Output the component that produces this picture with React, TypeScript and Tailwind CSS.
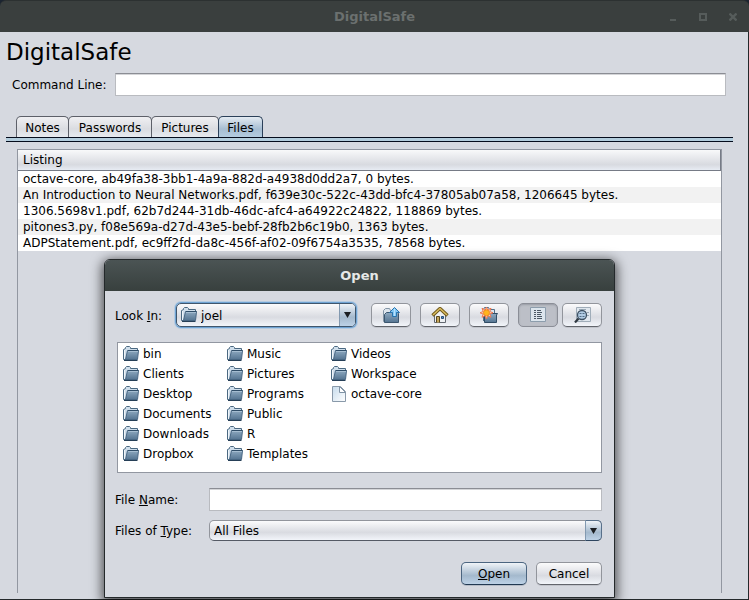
import type { ReactNode } from 'react';

const TABS = [
  { name: 'Notes', width: 'w-[53px]' },
  { name: 'Passwords', width: 'w-[84px]' },
  { name: 'Pictures', width: 'w-[68px]' },
  { name: 'Files', width: 'w-[45px]' },
];

const LISTING = [
  'octave-core, ab49fa38-3bb1-4a9a-882d-a4938d0dd2a7, 0 bytes.',
  'An Introduction to Neural Networks.pdf, f639e30c-522c-43dd-bfc4-37805ab07a58, 1206645 bytes.',
  '1306.5698v1.pdf, 62b7d244-31db-46dc-afc4-a64922c24822, 118869 bytes.',
  'pitones3.py, f08e569a-d27d-43e5-bebf-28fb2b6c19b0, 1363 bytes.',
  'ADPStatement.pdf, ec9ff2fd-da8c-456f-af02-09f6754a3535, 78568 bytes.',
];

const ENTRIES = [
  'bin', 'Clients', 'Desktop', 'Documents', 'Downloads', 'Dropbox',
  'Music', 'Pictures', 'Programs', 'Public', 'R', 'Templates',
  'Videos', 'Workspace', 'octave-core',
];

const FIELD =
  'h-[23px] min-w-0 flex-1 border border-[#b9bbc0] border-t-[#8b8d94] bg-white px-1.5 shadow-[inset_0_1px_0_#d4d5d8] outline-none';
const SILVER = 'bg-linear-to-b from-[#fbfbfc] via-[#d9dbe1] via-60% to-[#f2f5fa]';
const BLUE = 'bg-linear-to-b from-[#f0f4f8] via-[#a4b9cd] via-60% to-[#bdd2e7]';
const TOOL = 'flex h-6 w-10 items-center justify-center rounded-[5px] border';

function FolderIcon() {
  return (
    <svg width="16" height="16" viewBox="0 0 16 16" aria-hidden="true">
      <path d="M.5 13.5V3.5L2.5 2.5V1.5L3.5.5H6.5L7.5 1.5V2.5H14.5V5.5L12 13.5Z" fill="#cfdeeb" stroke="#4a6881" />
      <path d="M1.5 4V13" stroke="#eef4f9" />
      <path d="M4.5 4.5H15.5L14.5 13.5H2.5Z" fill="url(#folder-front)" stroke="#486783" />
      <path d="M5 4.5H15.5" stroke="#2f4d68" />
      <path d="M5 5.5H15" stroke="#a5bdd1" />
      <path d="M1 14.5H14.5" stroke="#263f57" />
    </svg>
  );
}

function FileIcon() {
  return (
    <svg width="16" height="16" viewBox="0 0 16 16" aria-hidden="true">
      <path d="M1.5.5H9.5L14.5 5.5V15.5H1.5Z" fill="url(#file-page)" stroke="#8999a9" />
      <path d="M8.5.5V6.5H14.5Z" fill="#fff" stroke="#8093a5" />
    </svg>
  );
}

function UpIcon() {
  return (
    <svg width="18" height="16" viewBox="0 0 18 16" aria-hidden="true">
      <path d="M1.5 14.5V3.5L3.5 1.5H7.5L8.5 3.5H13.5V14.5Z" fill="#dde5ed" stroke="#8395a6" />
      <path d="M4.5 5.5H15.5L16.5 6.5V15.5H2.5V7.5Z" fill="url(#folder-front)" stroke="#3b566f" />
      <path d="M12.5.5L17.5 5.5H14.5V9.5H10.5V5.5H7.5Z" fill="#84c8f5" stroke="#2874ae" />
      <path d="M12.5 2V9" stroke="#b8e1fb" />
    </svg>
  );
}

function HomeIcon() {
  return (
    <svg width="18" height="16" viewBox="0 0 18 16" aria-hidden="true">
      <path d="M3.5 7L9 2.5L14.5 7V15.5H3.5Z" fill="#edf0f3" stroke="#626870" />
      <path d="M1.5 8.5L9 1.5L16.5 8.5" fill="none" stroke="#6d571c" strokeWidth="3.4" />
      <path d="M2 8L9 1.5L16 8" fill="none" stroke="#dabc5e" strokeWidth="1.5" />
      <path d="M5.5 15.5V9.5H8.5V15.5" fill="#c5a65b" stroke="#59481f" />
      <path d="M10.5 9.5H12.5V11.5H10.5Z" fill="#4c91cd" stroke="#284c77" />
    </svg>
  );
}

function NewFolderIcon() {
  return (
    <svg width="18" height="16" viewBox="0 0 18 16" aria-hidden="true">
      <path d="M3.5 14V2.5L4.5.5H8.5L9.5 2.5H14.5V7" fill="#dbe5ee" stroke="#536e87" />
      <path d="M4.5 6.5H17.5L16.5 8V15.5H4.5Z" fill="url(#folder-front)" stroke="#304c65" />
      <path d="M6.5 0L7.7 3.2L11 1.2L9.8 4.5L13 5.8L9.8 7L11 10.3L7.7 8.5L6.5 12L5.2 8.5L2 10.3L3.2 7L0 5.8L3.2 4.5L2 1.2L5.2 3.2Z" fill="#ffe0cc" stroke="#ed7750" />
      <circle cx="6.5" cy="5.8" r="3" fill="#ffb51d" stroke="#f28a20" />
    </svg>
  );
}

function ListIcon() {
  return (
    <svg width="16" height="16" viewBox="0 0 16 16" aria-hidden="true">
      <path d="M.5.5H15.5V14.5H.5Z" fill="#dce5ed" stroke="#8c9dac" />
      <path d="M4 3.5H6M4 5.5H6M4 7.5H6M4 9.5H6M4 11.5H6M7 3.5H11M7 5.5H12M7 7.5H11M7 9.5H12M7 11.5H12" stroke="#4b5966" />
    </svg>
  );
}

function DetailsIcon() {
  return (
    <svg width="18" height="16" viewBox="0 0 18 16" aria-hidden="true">
      <path d="M3.5.5H17.5V14.5H3.5Z" fill="#e0e7ee" stroke="#a0adb9" />
      <path d="M6 2.5H13M14 5.5H16M14 8.5H16" stroke="#9aa9b6" />
      <path d="M5.5 11.5L2 15.5" stroke="#2f3841" strokeWidth="2.2" />
      <circle cx="9" cy="8" r="4.5" fill="#b1cce4" stroke="#3e5163" strokeWidth="1.3" />
      <path d="M6.5 6.5H8.5M9.5 6.5H11.5M6.5 9.5H8.5M9.5 9.5H11.5" stroke="#526c85" />
    </svg>
  );
}

function Arrow() {
  return (
    <svg width="7" height="6" viewBox="0 0 7 6" aria-hidden="true">
      <path d="M0 0H7L3.5 6Z" fill="#1b1e22" />
    </svg>
  );
}

function ToolButton({ label, pressed, children }: { label: string; pressed?: boolean; children: ReactNode }) {
  const look = pressed
    ? 'border-[#8b8e97] bg-[#bcbfc7] shadow-[inset_0_1px_2px_#989ba4]'
    : `border-[#92959c] border-b-[#62656c] shadow-[0_1px_0_#c1c4cb] ${SILVER}`;
  return (
    <button type="button" aria-label={label} aria-pressed={pressed} className={`${TOOL} ${look}`}>
      {children}
    </button>
  );
}

function OpenDialog() {
  return (
    <div
      role="dialog"
      aria-labelledby="dialog-title"
      className="absolute top-[259px] left-[104px] w-[511px] rounded-t-[6px] border border-[#24292b] bg-[#d6d9e0] shadow-[0_3px_12px_2px_rgba(0,0,0,0.65)]"
    >
      <h2 id="dialog-title" className="flex h-[31px] items-center justify-center rounded-t-[5px] bg-linear-to-b from-[#4b5454] to-[#38403e] text-[13px] font-bold text-[#e6e8e7]">
        Open
      </h2>
      <div className="flex flex-col pt-3 pr-3 pb-3 pl-2.5">
        <div className="flex items-center">
          <label htmlFor="look-in" className="w-[61px] pt-px">Look <u>I</u>n:</label>
          <div className="relative h-6 w-[180px]">
            <select id="look-in" className={`h-full w-full appearance-none rounded-[5px] border border-[#3f566d] pt-px pl-6 shadow-[0_0_0_1px_#6fa3d3,0_0_0_2px_#b5cbe1] outline-none ${SILVER}`}>
              <option>joel</option>
            </select>
            <span className="pointer-events-none absolute top-1 left-[5px]"><FolderIcon /></span>
            <span className={`pointer-events-none absolute inset-y-px right-px flex w-4 items-center justify-center rounded-r-[4px] border-l border-[#8299b0] ${BLUE}`}>
              <Arrow />
            </span>
          </div>
          <div className="ml-auto flex gap-[9px]">
            <ToolButton label="Up One Level"><UpIcon /></ToolButton>
            <ToolButton label="Home"><HomeIcon /></ToolButton>
            <ToolButton label="Create New Folder"><NewFolderIcon /></ToolButton>
            <div className="flex gap-1">
              <ToolButton label="List" pressed><ListIcon /></ToolButton>
              <ToolButton label="Details"><DetailsIcon /></ToolButton>
            </div>
          </div>
        </div>
        <ul className="mt-[15px] ml-0.5 grid h-[131px] auto-cols-[104px] grid-flow-col grid-rows-[repeat(6,20px)] border border-[#9297a1] bg-white pt-px pl-[5px]">
          {ENTRIES.map((name) => (
            <li key={name} className="flex items-center gap-1 whitespace-nowrap">
              {name === 'octave-core' ? <FileIcon /> : <FolderIcon />}
              {name}
            </li>
          ))}
        </ul>
        <div className="mt-[15px] flex items-center">
          <label htmlFor="file-name" className="w-[94px]">File <u>N</u>ame:</label>
          <input id="file-name" type="text" className={FIELD} />
        </div>
        <div className="mt-[9px] flex items-center">
          <label htmlFor="file-type" className="w-[94px]">Files of <u>T</u>ype:</label>
          <div className="relative h-[21px] flex-1">
            <select id="file-type" className={`h-full w-full appearance-none rounded-[5px] border border-[#92959c] border-b-[#555a65] pl-1 outline-none ${SILVER}`}>
              <option>All Files</option>
            </select>
            <span className={`pointer-events-none absolute inset-y-0 right-0 flex w-[17px] items-center justify-center rounded-r-[5px] border border-[#58708a] border-b-[#2d455f] border-l-[#8299b0] ${BLUE}`}>
              <Arrow />
            </span>
          </div>
        </div>
        <div className="mt-[21px] flex justify-end gap-[9px]">
          <button type="button" className={`h-[23px] w-[66px] rounded-[5px] border border-[#4b6580] border-b-[#213952] shadow-[0_1px_0_#b4bbc6] ${BLUE}`}><u>O</u>pen</button>
          <button type="button" className={`h-[23px] w-[66px] rounded-[5px] border border-[#92959c] border-b-[#62656c] shadow-[0_1px_0_#c1c4cb] ${SILVER}`}>Cancel</button>
        </div>
      </div>
    </div>
  );
}

export default function App() {
  return (
    <div className="relative flex min-h-screen flex-col overflow-hidden bg-[#1b2430] font-['DejaVu_Sans',sans-serif] text-[12px] leading-4 text-black">
      <svg width="0" height="0" className="absolute" aria-hidden="true">
        <defs>
          <linearGradient id="folder-front" x1="0" y1="0" x2="0" y2="1">
            <stop offset="0" stopColor="#8ea9c0" />
            <stop offset="1" stopColor="#557592" />
          </linearGradient>
          <linearGradient id="file-page" x1="0" y1="0" x2="1" y2="1">
            <stop offset="0" stopColor="#c6dbec" />
            <stop offset="1" stopColor="#fff" />
          </linearGradient>
        </defs>
      </svg>
      <header className="relative flex h-8 items-center justify-center rounded-t-[6px] border-t border-[#2c3131] bg-[#3a3f3e] text-[13px] font-bold text-[#6b706f]">
        DigitalSafe
        <div className="absolute inset-y-0 right-[9px] flex items-center gap-4">
          <button type="button" aria-label="Minimize" className="flex h-3.5 w-3.5 items-center justify-center">
            <svg width="8" height="8" viewBox="0 0 8 8"><path d="M1 7H7" stroke="#565c5b" strokeWidth="2" /></svg>
          </button>
          <button type="button" aria-label="Maximize" className="flex h-3.5 w-3.5 items-center justify-center">
            <svg width="8" height="8" viewBox="0 0 8 8"><path d="M1 1H7V7H1Z" fill="none" stroke="#565c5b" strokeWidth="2" /></svg>
          </button>
          <button type="button" aria-label="Close" className="flex h-3.5 w-3.5 items-center justify-center">
            <svg width="8" height="8" viewBox="0 0 8 8"><path d="M.5 .5L7.5 7.5M7.5 .5L.5 7.5" stroke="#565c5b" strokeWidth="2.4" /></svg>
          </button>
        </div>
      </header>
      <main className="flex flex-1 flex-col border-r border-b border-[#24292b] bg-[#d6d9e0]">
        <h1 className="pl-1.5 text-[23px] leading-10">DigitalSafe</h1>
        <div className="flex h-[25px] items-center gap-2 pr-[22px] pl-3">
          <label htmlFor="command-line">Command Line:</label>
          <input id="command-line" type="text" className={FIELD} />
        </div>
        <div role="tablist" className="mt-[19px] flex pl-4">
          {TABS.map((tab) => (
            <button
              key={tab.name}
              type="button"
              role="tab"
              aria-selected={tab.name === 'Files'}
              className={`-mr-px h-[21px] rounded-t-[5px] border border-b-0 pt-px ${tab.width} ${
                tab.name === 'Files'
                  ? 'border-[#2b4059] bg-linear-to-b from-[#e4ebf2] via-[#a6bdd2] via-60% to-[#b4cce0]'
                  : 'border-[#5d6069] bg-linear-to-b from-[#f0f0f3] via-[#dadce1] via-60% to-[#e7eaef]'
              }`}
            >
              {tab.name}
            </button>
          ))}
        </div>
        <div className="mr-[15px] ml-1.5 h-[5px] border-y border-[#050c1c] bg-[#b3cddd]" />
        <div className="mt-[7px] mr-[26px] mb-1.5 ml-[17px] flex-1 border border-b-0 border-[#9297a1]">
          <table className="w-full border-collapse text-left">
            <thead>
              <tr className="h-[21px] bg-linear-to-b from-[#f8f9fa] via-[#d8dae0] via-70% to-[#eaeff7] shadow-[inset_-1px_-1px_0_#767b86]">
                <th className="px-[5px] pb-0.5 font-normal">Listing</th>
              </tr>
            </thead>
            <tbody>
              {LISTING.map((row) => (
                <tr key={row} className="h-4 bg-white even:bg-[#f2f2f2]">
                  <td className="px-[5px] pt-px leading-[15px]">{row}</td>
                </tr>
              ))}
            </tbody>
          </table>
        </div>
      </main>
      <OpenDialog />
    </div>
  );
}
